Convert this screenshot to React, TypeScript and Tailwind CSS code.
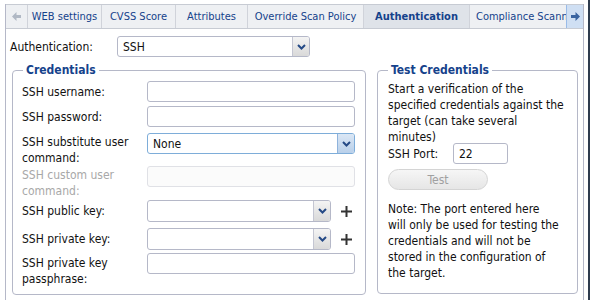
import React from 'react';

const font = "font-['DejaVu_Sans_Condensed','DejaVu_Sans',sans-serif]";

function Arrow({ blue }: { blue?: boolean }) {
  return (
    <div
      className={
        'w-[17px] h-full flex items-center justify-center border-l ' +
        (blue
          ? 'bg-gradient-to-b from-[#dbe7f5] to-[#b9d0ea] border-[#8fb3dc]'
          : 'bg-gradient-to-b from-[#f4f4f4] to-[#d9d9d9] border-[#c4c6d2]')
      }
    >
      <svg width="9" height="6" viewBox="0 0 9 6">
        <path d="M1 1 L4.5 4.5 L8 1" fill="none" stroke="#254a86" strokeWidth="2" />
      </svg>
    </div>
  );
}

function TextInput({ w = 'w-[208px]', disabled, value }: { w?: string; disabled?: boolean; value?: string }) {
  return (
    <div
      className={
        w +
        ' h-[21px] shrink-0 rounded-[3px] border flex items-center px-[5px] ' +
        (disabled ? 'border-[#e0e1e6] bg-[#fbfbfb]' : 'border-[#b5b8c8] bg-white')
      }
    >
      {value}
    </div>
  );
}

function Select({ w, value, blue, h = 'h-[21px]' }: { w: string; value?: string; blue?: boolean; h?: string }) {
  return (
    <div
      className={
        w +
        ' ' +
        h +
        ' shrink-0 rounded-[3px] border flex overflow-hidden bg-white ' +
        (blue ? 'border-[#7eadd9]' : 'border-[#b5b8c8]')
      }
    >
      <div className="flex-1 flex items-center px-[5px]">{value}</div>
      <Arrow blue={blue} />
    </div>
  );
}

function Plus() {
  return (
    <svg width="11" height="11" viewBox="0 0 11 11" className="ml-[10px]">
      <path d="M5.5 0 V11 M0 5.5 H11" stroke="#333" strokeWidth="2" />
    </svg>
  );
}

const tabs = [
  { label: 'WEB settings', w: 'w-[74px]' },
  { label: 'CVSS Score', w: 'w-[74px]' },
  { label: 'Attributes', w: 'w-[72px]' },
  { label: 'Override Scan Policy', w: 'w-[116px]' },
  { label: 'Authentication', w: 'w-[106px]', active: true },
  { label: 'Compliance Scanning', w: 'w-[120px]' },
];

export default function App() {
  return (
    <div className={'w-[590px] h-[300px] bg-white flex text-[12px] leading-[16px] text-[#111] overflow-hidden ' + font}>
      <div className="ml-[5px] w-[579px] mt-[4px] flex flex-col border-x border-[#b5b8c8]">
        {/* tab strip */}
        <div className="h-[25px] shrink-0 flex border-t border-b border-[#c7cbd3] bg-[#eef0f3] text-[11px]">
          <div className="w-[22px] shrink-0 flex items-center justify-center border-r border-[#d0d3da]">
            <svg width="9" height="9" viewBox="0 0 9 9">
              <path d="M0 4.5 L4.5 0 V3 H9 V6 H4.5 V9 Z" fill="#b0b8c4" />
            </svg>
          </div>
          <div className="flex-1 flex overflow-hidden">
            {tabs.map((t) => (
              <div
                key={t.label}
                className={
                  t.w +
                  ' shrink-0 flex items-center justify-center whitespace-nowrap border-r border-[#d0d3da] text-[#15428b] ' +
                  (t.active ? 'bg-[#dfe3e9] font-bold' : 'bg-[#eef0f3]')
                }
              >
                {t.label}
              </div>
            ))}
          </div>
          <div className="w-[17px] shrink-0 flex items-center justify-center bg-[#cfdff3] border-l border-[#99bbe8]">
            <svg width="9" height="9" viewBox="0 0 9 9">
              <path d="M9 4.5 L4.5 0 V3 H0 V6 H4.5 V9 Z" fill="#3a64a0" />
            </svg>
          </div>
        </div>

        <div className="flex items-center mt-[7px] ml-[4px]">
          <div className="w-[107px]">Authentication:</div>
          <Select w="w-[193px]" value="SSH" />
        </div>

        <div className="flex mt-[5px] ml-[6px] gap-[11px]">
          {/* Credentials */}
          <fieldset className="w-[354px] h-[233px] border border-[#b5b8c8] rounded-[4px] pl-[9px] pr-[9px] pt-[3px]">
            <legend className="px-[3px] ml-[1px] font-bold text-[#15428b]">Credentials</legend>
            <div className="flex items-center h-[21px]">
              <div className="w-[125px]">SSH username:</div>
              <TextInput />
            </div>
            <div className="flex items-center h-[21px] mt-[4px]">
              <div className="w-[125px]">SSH password:</div>
              <TextInput />
            </div>
            <div className="flex items-start h-[32px] mt-[6px]">
              <div className="w-[125px] pt-[1px]">SSH substitute user command:</div>
              <Select w="w-[208px]" value="None" blue />
            </div>
            <div className="flex items-start h-[32px] mt-[1px] text-[#a8a8a8]">
              <div className="w-[125px] pt-[1px]">SSH custom user command:</div>
              <TextInput disabled />
            </div>
            <div className="flex items-center h-[22px] mt-[2px]">
              <div className="w-[125px]">SSH public key:</div>
              <Select w="w-[184px]" h="h-[22px]" />
              <Plus />
            </div>
            <div className="flex items-center h-[22px] mt-[6px]">
              <div className="w-[125px]">SSH private key:</div>
              <Select w="w-[184px]" h="h-[22px]" />
              <Plus />
            </div>
            <div className="flex items-start mt-[3px]">
              <div className="w-[125px] pt-[2px]">SSH private key passphrase:</div>
              <TextInput />
            </div>
          </fieldset>

          {/* Test credentials */}
          <fieldset className="w-[201px] h-[232px] border border-[#b5b8c8] rounded-[4px] pl-[10px] pr-[6px] pt-[3px]">
            <legend className="px-[3px] ml-[0px] font-bold text-[#15428b]">Test Credentials</legend>
            <div className="whitespace-nowrap">
              Start a verification of the
              <br />
              specified credentials against the
              <br />
              target (can take several
              <br />
              minutes)
            </div>
            <div className="flex items-center -mt-[2px]">
              <div className="w-[65px]">SSH Port:</div>
              <TextInput w="w-[55px]" value="22" />
            </div>
            <div className="mt-[5px] w-[100px] h-[21px] rounded-full border border-[#d4d4d4] bg-gradient-to-b from-[#f6f6f6] to-[#e6e6e6] flex items-center justify-center text-[#a0a0a0]">
              Test
            </div>
            <div className="mt-[11px] whitespace-nowrap">
              Note: The port entered here
              <br />
              will only be used for testing the
              <br />
              credentials and will not be
              <br />
              stored in the configuration of
              <br />
              the target.
            </div>
          </fieldset>
        </div>
      </div>
      <div className="ml-[4px] w-[2px] bg-[#2f3d4f]" />
    </div>
  );
}
